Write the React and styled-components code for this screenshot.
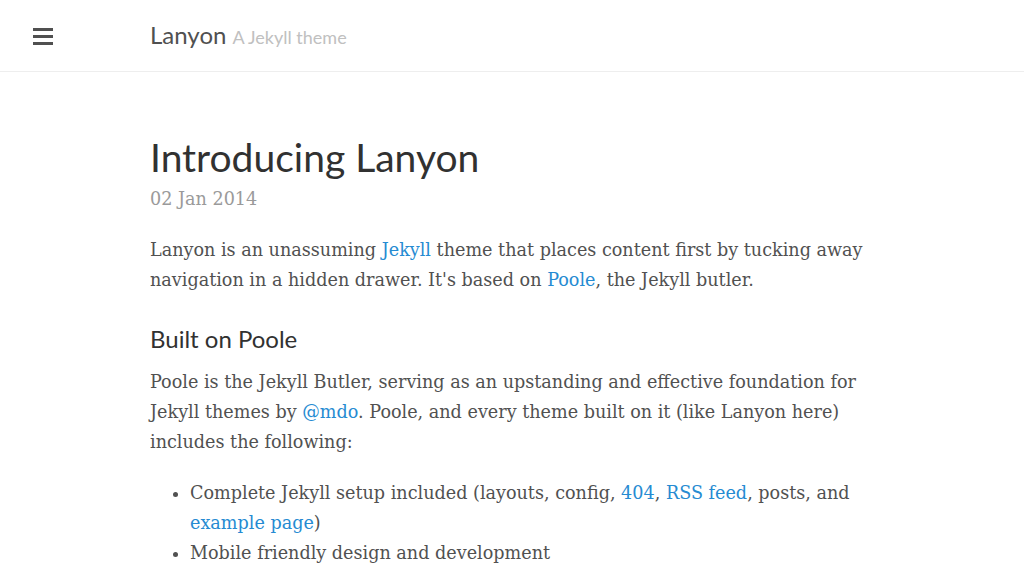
import styled, { createGlobalStyle } from 'styled-components';

const GlobalStyle = createGlobalStyle`
  html, body {
    margin: 0;
    padding: 0;
    background: #fff;
  }
  body {
    font-family: "DejaVu Serif", "Liberation Serif", serif;
    font-size: 17.6px;
    line-height: 30px;
    color: #515151;
  }
`;

const Masthead = styled.header`
  display: flex;
  align-items: center;
  height: 72px;
  border-bottom: 1px solid #eee;
  box-sizing: border-box;
`;

const ToggleButton = styled.button`
  display: flex;
  align-items: center;
  justify-content: center;
  width: 86px;
  height: 72px;
  padding: 2px 0 0;
  border: 0;
  background: transparent;
  cursor: pointer;
`;

const Title = styled.h3`
  margin: 0 0 0 64px;
  font-family: Lato, "Open Sans", sans-serif;
  font-weight: 400;
  font-size: 24px;
  line-height: 1;
  color: #505050;
  padding-bottom: 2px;
`;

const Tagline = styled.small`
  font-size: 18px;
  color: #c0c0c0;
  margin-left: 6px;
`;

const Container = styled.main`
  padding: 55px 0 0 150px;
  width: 740px;
`;

const PostTitle = styled.h1`
  margin: 0;
  font-family: Lato, "Open Sans", sans-serif;
  font-weight: 400;
  font-size: 39px;
  line-height: 60px;
  color: #313131;
`;

const PostDate = styled.span`
  display: block;
  margin: -3px 0 21px;
  color: #9a9a9a;
`;

const Paragraph = styled.p`
  margin: 0 0 21px;
`;

const SubHeading = styled.h2`
  margin: 29px 0 13px;
  font-family: Lato, "Open Sans", sans-serif;
  font-weight: 400;
  font-size: 24px;
  line-height: 30px;
  color: #313131;
`;

const List = styled.ul`
  margin: 0;
  padding-left: 40px;
`;

const Link = styled.a`
  color: #268bd2;
  text-decoration: none;
`;

const Hamburger = () => (
  <svg width="20" height="17" viewBox="0 0 20 17">
    <rect x="0" y="0" width="20" height="3" fill="#505050" />
    <rect x="0" y="7" width="20" height="3" fill="#505050" />
    <rect x="0" y="14" width="20" height="3" fill="#505050" />
  </svg>
);

export default function App() {
  return (
    <>
      <GlobalStyle />
      <Masthead>
        <ToggleButton aria-label="Toggle sidebar">
          <Hamburger />
        </ToggleButton>
        <Title>
          Lanyon<Tagline>A Jekyll theme</Tagline>
        </Title>
      </Masthead>
      <Container>
        <PostTitle>Introducing Lanyon</PostTitle>
        <PostDate>02 Jan 2014</PostDate>
        <Paragraph>
          Lanyon is an unassuming <Link href="#">Jekyll</Link> theme that places content first by tucking away navigation in a hidden drawer. It's based on <Link href="#">Poole</Link>, the Jekyll butler.
        </Paragraph>
        <SubHeading>Built on Poole</SubHeading>
        <Paragraph>
          Poole is the Jekyll Butler, serving as an upstanding and effective foundation for Jekyll themes by <Link href="#">@mdo</Link>. Poole, and every theme built on it (like Lanyon here) includes the following:
        </Paragraph>
        <List>
          <li>
            Complete Jekyll setup included (layouts, config, <Link href="#">404</Link>, <Link href="#">RSS feed</Link>, posts, and <Link href="#">example page</Link>)
          </li>
          <li>Mobile friendly design and development</li>
        </List>
      </Container>
    </>
  );
}
